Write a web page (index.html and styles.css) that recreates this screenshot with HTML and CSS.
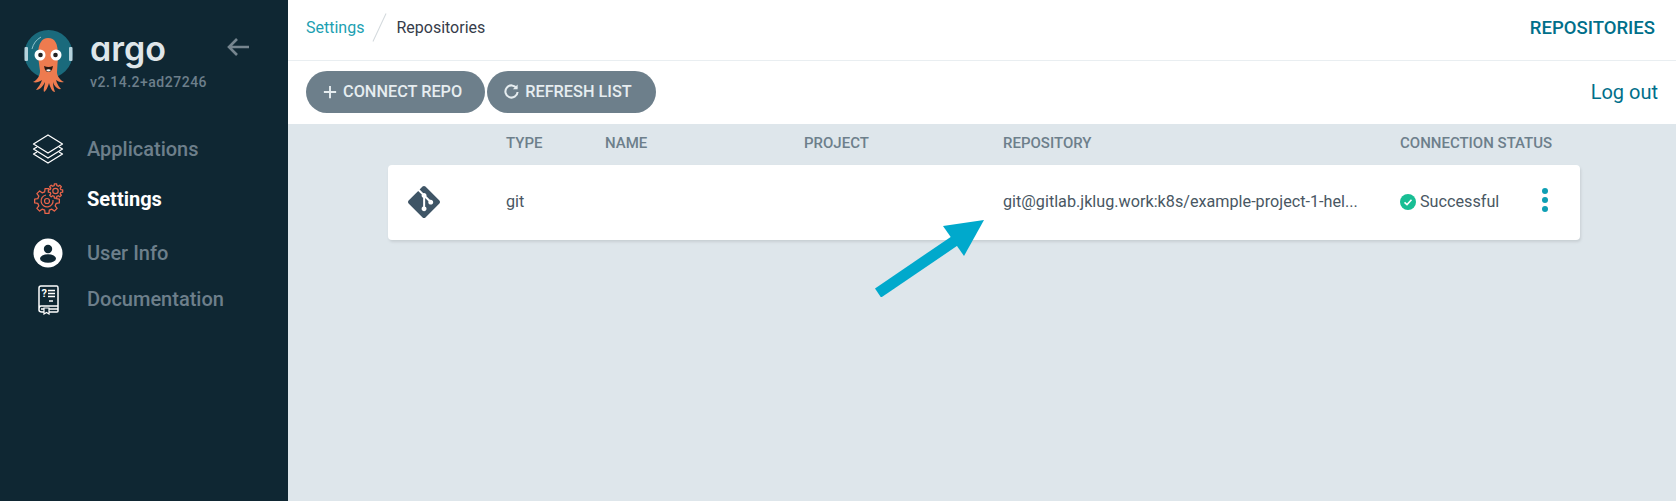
FILE: index.html
```html
<!DOCTYPE html>
<html lang="en">
<head>
<meta charset="utf-8">
<title>Repositories</title>
<link rel="stylesheet" href="styles.css">
</head>
<body>
<div class="app">
  <aside class="sidebar">
    <div class="brand">
      <svg class="logo" viewBox="0 0 50 64" width="50" height="64" aria-hidden="true">
        <circle cx="24.500" cy="24" r="24" fill="#1a6a7c"/>
        <path d="M8 19 A19 19 0 0 1 17 7" fill="none" stroke="#8fc3cc" stroke-width="1"/>
        <rect x="0.500" y="17" width="3.500" height="14" rx="1" fill="#b5d2dc"/>
        <rect x="45" y="17" width="3.500" height="14" rx="1" fill="#b5d2dc"/>
        <path d="M14 26 C14 13 18 8 24 8 C31 8 34 13 34 26 L33 42 C33 46 36 50 40 52 C36 53 34 51 32 50 C33 54 35 57 37 59 C34 60 30 56 29 52 C29 56 30 59 31 62 C28 62 26 57 25 53 C24 57 22 61 20 62 C19 59 21 55 21 52 C19 56 16 60 12 60 C14 57 17 54 18 50 C15 52 12 53 9 52 C13 50 16 46 16 41 Z" fill="#ee7b4f"/>
        <circle cx="16" cy="25" r="5.500" fill="#fff"/>
        <circle cx="32" cy="25" r="5.500" fill="#fff"/>
        <circle cx="16.500" cy="25" r="2.300" fill="#222"/>
        <circle cx="31.500" cy="25" r="2.300" fill="#222"/>
        <path d="M20 36 Q24.500 38 29 36 Q28 42 24.500 42 Q21 42 20 36 Z" fill="#2b1a14"/>
        <path d="M22 40 Q24.500 38.500 27 40 Q24.500 43 22 40 Z" fill="#fff"/>
      </svg>
      <div class="brand-text">
        <div class="wordmark">argo</div>
        <div class="version">v2.14.2+ad27246</div>
      </div>
      <svg class="collapse" viewBox="0 0 24 20" width="24" height="20" aria-hidden="true">
        <path d="M23 10 H3 M11 2 L3 10 L11 18" fill="none" stroke="#76858f" stroke-width="2.600"/>
      </svg>
    </div>
    <nav class="nav">
      <a class="nav-item nav-apps">
        <span class="nav-icon">
          <svg viewBox="0 0 32 32" width="32" height="32" fill="none" stroke="#fff" stroke-width="1.300" stroke-linejoin="round" aria-hidden="true">
            <path d="M16 2 L30.500 11 L16 20 L1.500 11 Z"/>
            <path d="M5 14 L1.500 16 L16 25 L30.500 16 L27 14"/>
            <path d="M5 19 L1.500 21 L16 30 L30.500 21 L27 19"/>
          </svg>
        </span>
        <span class="nav-label">Applications</span>
      </a>
      <a class="nav-item nav-settings nav-active">
        <span class="nav-icon">
          <svg viewBox="0 0 32 32" width="32" height="32" fill="none" stroke="#e9654b" aria-hidden="true">
            <path transform="translate(15 18)" stroke-width="1.300" stroke-linejoin="round" d="M-2.300 -9.220 L-1.960 -12.350 L1.960 -12.350 L2.300 -9.220 L4.890 -8.140 L7.350 -10.110 L10.110 -7.350 L8.140 -4.890 L9.220 -2.300 L12.350 -1.960 L12.350 1.960 L9.220 2.300 L8.140 4.890 L10.110 7.350 L7.350 10.110 L4.890 8.140 L2.300 9.220 L1.960 12.350 L-1.960 12.350 L-2.300 9.220 L-4.890 8.140 L-7.350 10.110 L-10.110 7.350 L-8.140 4.890 L-9.220 2.300 L-12.350 1.960 L-12.350 -1.960 L-9.220 -2.300 L-8.140 -4.890 L-10.110 -7.350 L-7.350 -10.110 L-4.890 -8.140 Z"/>
            <path d="M21 17 A6 6 0 1 1 14 12" stroke-width="1.200"/>
            <circle cx="15" cy="18" r="2.500" stroke-width="1.200"/>
            <path transform="translate(23.500 8) scale(0.580)" fill="#0f2733" stroke-width="2.200" stroke-linejoin="round" d="M-2.300 -9.220 L-1.960 -12.350 L1.960 -12.350 L2.300 -9.220 L4.890 -8.140 L7.350 -10.110 L10.110 -7.350 L8.140 -4.890 L9.220 -2.300 L12.350 -1.960 L12.350 1.960 L9.220 2.300 L8.140 4.890 L10.110 7.350 L7.350 10.110 L4.890 8.140 L2.300 9.220 L1.960 12.350 L-1.960 12.350 L-2.300 9.220 L-4.890 8.140 L-7.350 10.110 L-10.110 7.350 L-8.140 4.890 L-9.220 2.300 L-12.350 1.960 L-12.350 -1.960 L-9.220 -2.300 L-8.140 -4.890 L-10.110 -7.350 L-7.350 -10.110 L-4.890 -8.140 Z"/>
            <circle cx="23.500" cy="8" r="2.700" stroke-width="1.200"/>
          </svg>
        </span>
        <span class="nav-label">Settings</span>
      </a>
      <a class="nav-item nav-user">
        <span class="nav-icon">
          <svg viewBox="0 0 32 32" width="32" height="32" aria-hidden="true">
            <circle cx="16" cy="16" r="14.500" fill="#fff"/>
            <circle cx="16" cy="12" r="4.200" fill="#0f2733"/>
            <ellipse cx="16" cy="21.500" rx="8" ry="4.300" fill="#0f2733"/>
          </svg>
        </span>
        <span class="nav-label">User Info</span>
      </a>
      <a class="nav-item nav-docs">
        <span class="nav-icon">
          <svg viewBox="0 0 32 32" width="32" height="32" fill="none" stroke="#fff" stroke-width="1.500" aria-hidden="true">
            <path d="M7 27 V5 Q7 3 9 3 H25 Q26 3 26 5 V23 H9 Q7 23 7 27 Q7 29 10 29 H12 M17 29 H25 Q26 29 26 28 V23 M9 26 H12 M17 26 H26"/>
            <path d="M12 25 H17 V31 L14.500 29.500 L12 31 Z" stroke-width="1.200"/>
            <path d="M16 7.500 H23 M16 10.500 H23 M16 13.500 H23 M17 18 H21"/>
            <text x="9.500" y="14" class="doc-mark">?</text>
          </svg>
        </span>
        <span class="nav-label">Documentation</span>
      </a>
    </nav>
  </aside>
  <main class="main">
    <header class="topbar">
      <div class="crumbs">
        <a class="crumb-link">Settings</a>
        <span class="crumb-sep"></span>
        <span class="crumb-current">Repositories</span>
      </div>
      <div class="page-title">REPOSITORIES</div>
    </header>
    <div class="toolbar">
      <div class="actions">
        <button class="btn btn-connect">
          <svg viewBox="0 0 16 16" width="14" height="14" fill="none" stroke="#e6edf0" stroke-width="2.200" aria-hidden="true"><path d="M8 1 V15 M1 8 H15"/></svg>
          CONNECT REPO
        </button>
        <button class="btn btn-refresh">
          <svg viewBox="0 0 16 16" width="15" height="15" fill="none" stroke="#e6edf0" stroke-width="2.200" aria-hidden="true"><path d="M13.500 4.500 A6.500 6.500 0 1 0 14.500 8.500"/><path d="M14.500 0.500 V5.500 H9.500 Z" fill="#e6edf0" stroke="none"/></svg>
          REFRESH LIST
        </button>
      </div>
      <a class="logout">Log out</a>
    </div>
    <section class="content">
      <div class="table">
        <div class="cols table-head">
          <span></span>
          <span>TYPE</span>
          <span>NAME</span>
          <span>PROJECT</span>
          <span>REPOSITORY</span>
          <span>CONNECTION STATUS</span>
        </div>
        <div class="cols card">
          <span class="git-cell">
            <svg viewBox="0 0 24 24" width="32" height="32" aria-hidden="true"><path fill="#3f5566" d="M23.546 10.93L13.067.452c-.604-.603-1.582-.603-2.188 0L8.708 2.627l2.76 2.76c.645-.215 1.379-.07 1.889.441.516.515.658 1.258.438 1.9l2.658 2.66c.645-.223 1.387-.078 1.9.435.721.72.721 1.884 0 2.604-.719.719-1.881.719-2.6 0-.539-.541-.674-1.337-.404-1.996L12.86 8.955v6.525c.176.086.342.203.488.348.713.721.713 1.883 0 2.6-.719.721-1.889.721-2.609 0-.719-.719-.719-1.879 0-2.598.182-.18.387-.316.605-.406V8.835c-.217-.091-.424-.222-.6-.401-.545-.545-.676-1.342-.396-2.009L7.636 3.7.45 10.881c-.6.605-.6 1.584 0 2.189l10.48 10.477c.604.604 1.582.604 2.186 0l10.43-10.43c.605-.603.605-1.582 0-2.187"/></svg>
          </span>
          <span>git</span>
          <span></span>
          <span></span>
          <span class="repo-url">git@gitlab.jklug.work:k8s/example-project-1-hel...</span>
          <span class="status">
            <svg viewBox="0 0 16 16" width="16" height="16" aria-hidden="true"><circle cx="8" cy="8" r="8" fill="#18be94"/><path d="M4.500 8.300 L7 10.600 L11.500 5.800" fill="none" stroke="#fff" stroke-width="1.600"/></svg>
            <span>Successful</span>
            <span class="dots"><i></i><i></i><i></i></span>
          </span>
        </div>
      </div>
      <svg class="pointer" viewBox="0 0 110 80" width="110" height="80" aria-hidden="true">
        <path d="M3 76 L81 23" stroke="#00a9cc" stroke-width="11" fill="none"/>
        <path d="M109 3 L68 9 L89 39 Z" fill="#00a9cc"/>
      </svg>
    </section>
  </main>
</div>
</body>
</html>
```
FILE: styles.css
```css
* { box-sizing: border-box; }
html, body { margin: 0; height: 100%; }
body { font-family: Roboto, "Liberation Sans", sans-serif; color: #495763; overflow: hidden; }
.app { display: flex; height: 501px; }

.sidebar { width: 288px; flex: none; background: #0f2733; }
.brand { position: relative; display: flex; padding: 30px 0 0 24px; height: 128px; }
.logo { flex: none; }
.brand-text { margin-left: 16px; }
.wordmark { font-family: Inter, sans-serif; font-feature-settings: "cv11" 1; font-weight: 600; font-size: 34px; line-height: 38px; color: #dfe6ea; }
.version { margin-top: 5px; font-size: 14px; line-height: 18px; font-weight: 500; color: #6d7f8b; letter-spacing: 0.500px; }
.collapse { margin: 7px 0 0 19px; flex: none; }

.nav { display: flex; flex-direction: column; }
.nav-item { display: flex; align-items: center; height: 44px; padding-left: 32px; color: #6d7f8b; font-size: 20px; font-weight: 500; }
.nav-apps { height: 42px; }
.nav-settings { height: 58px; }
.nav-user { height: 50px; }
.nav-docs { height: 42px; }
.nav-active { color: #fff; font-weight: 700; }
.nav-icon { display: flex; width: 55px; flex: none; }
.doc-mark { font-size: 11px; font-weight: 700; fill: #fff; stroke: none; }

.main { flex: 1; display: flex; flex-direction: column; min-width: 0; background: #fff; }
.topbar { display: flex; align-items: center; justify-content: space-between; height: 61px; padding: 0 21px 5px 18px; border-bottom: 1px solid #e9eef1; }
.crumbs { display: flex; align-items: center; font-size: 16px; }
.crumb-link { color: #1c9fb2; }
.crumb-sep { width: 1px; height: 31px; margin: 0 16px 0 15px; background: #d2d8dc; transform: rotate(25deg); }
.crumb-current { color: #363c4a; }
.page-title { color: #006f8a; font-size: 18.500px; font-weight: 500; }

.toolbar { display: flex; align-items: center; justify-content: space-between; height: 63px; padding: 0 18px 2px 18px; }
.actions { display: flex; gap: 2px; }
.btn { display: flex; align-items: center; gap: 6px; height: 42px; padding: 0 23px 0 17px; border: 0; border-radius: 22px; background: #6d7f8b; color: #e6edf0; font: 500 16.300px Roboto, sans-serif; }
.btn-refresh { padding: 0 24px 0 17px; }
.logout { color: #006f8a; font-size: 20px; }

.content { position: relative; flex: 1; background: #dee6eb; }
.table { margin: 0 96px 0 100px; }
.cols { display: grid; grid-template-columns: 118px 99px 199px 199px 397px 1fr; align-items: center; }
.table-head { height: 41px; padding-bottom: 3px; color: #6d7f8b; font-size: 15px; font-weight: 500; white-space: nowrap; }
.card { height: 75px; padding-bottom: 2px; background: #fff; border-radius: 4px; box-shadow: 1px 2px 3px rgba(0, 0, 0, 0.100); font-size: 16.200px; color: #495763; }
.git-cell { display: flex; padding-left: 20px; }
.repo-url { white-space: nowrap; }
.status { display: flex; align-items: center; gap: 4px; }
.dots { display: flex; flex-direction: column; gap: 3px; margin-left: 39px; margin-top: -3px; }
.dots i { display: block; width: 6px; height: 6px; border-radius: 50%; background: #0e9fb4; }
.pointer { position: absolute; left: 587px; top: 93px; }
```
